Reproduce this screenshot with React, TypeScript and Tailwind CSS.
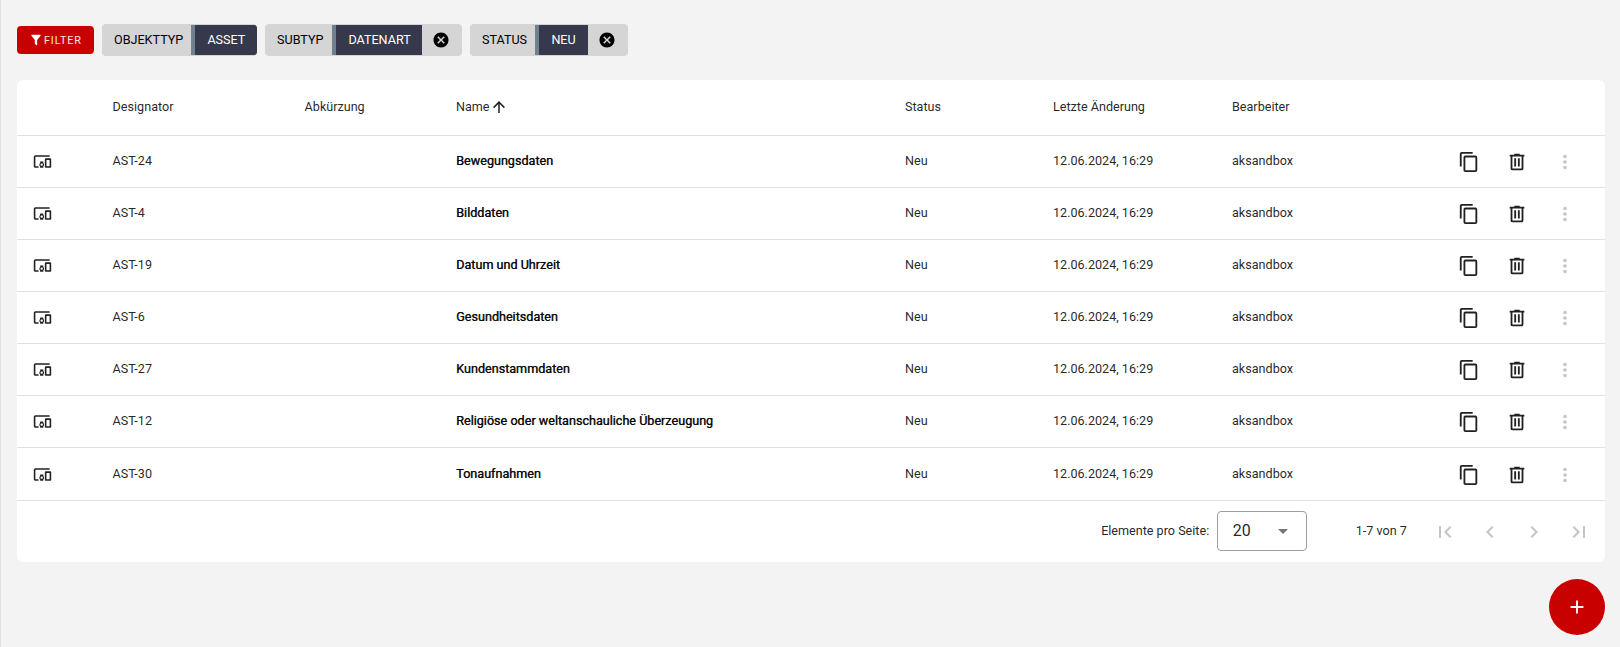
import React from "react";

type IconProps = { d: string; className: string };

function Icon({ d, className }: IconProps) {
  return (
    <svg viewBox="0 0 24 24" fill="currentColor" className={className} aria-hidden="true">
      <path d={d} />
    </svg>
  );
}

const icons = {
  filter: "M14,12V19.88C14.04,20.18 13.94,20.5 13.71,20.71C13.32,21.1 12.69,21.1 12.3,20.71L10.29,18.7C10.06,18.47 9.96,18.16 10,17.87V12H9.97L4.21,4.62C3.87,4.19 3.95,3.56 4.38,3.22C4.57,3.08 4.78,3 5,3H19C19.22,3 19.43,3.08 19.62,3.22C20.05,3.56 20.13,4.19 19.79,4.62L14.03,12H14Z",
  close: "M12,2C17.53,2 22,6.47 22,12C22,17.53 17.53,22 12,22C6.47,22 2,17.53 2,12C2,6.47 6.47,2 12,2M15.59,7L12,10.59L8.41,7L7,8.41L10.59,12L7,15.59L8.41,17L12,13.41L15.59,17L17,15.59L13.41,12L17,8.41L15.59,7Z",
  arrowUp: "M13,20H11V8L5.5,13.5L4.08,12.08L12,4.16L19.92,12.08L18.5,13.5L13,8V20Z",
  devices: "M3 6h18V4H3c-1.1 0-2 .9-2 2v12c0 1.1.9 2 2 2h4v-2H3V6zm10 6H9v1.78c-.61.55-1 1.33-1 2.22s.39 1.67 1 2.22V20h4v-1.78c.61-.55 1-1.34 1-2.22s-.39-1.67-1-2.22V12zm-2 5.5c-.83 0-1.5-.67-1.5-1.5s.67-1.5 1.5-1.5 1.5.67 1.5 1.5-.67 1.5-1.5 1.5zM22 8h-6c-.5 0-1 .5-1 1v10c0 .5.5 1 1 1h6c.5 0 1-.5 1-1V9c0-.5-.5-1-1-1zm-1 10h-4v-8h4v8z",
  copy: "M19,21H8V7H19M19,5H8A2,2 0 0,0 6,7V21A2,2 0 0,0 8,23H19A2,2 0 0,0 21,21V7A2,2 0 0,0 19,5M16,1H4A2,2 0 0,0 2,3V17H4V3H16V1Z",
  trash: "M9,3V4H4V6H5V19A2,2 0 0,0 7,21H17A2,2 0 0,0 19,19V6H20V4H15V3H9M7,6H17V19H7V6M9,8V17H11V8H9M13,8V17H15V8H13Z",
  dots: "M12,16A2,2 0 0,1 14,18A2,2 0 0,1 12,20A2,2 0 0,1 10,18A2,2 0 0,1 12,16M12,10A2,2 0 0,1 14,12A2,2 0 0,1 12,14A2,2 0 0,1 10,12A2,2 0 0,1 12,10M12,4A2,2 0 0,1 14,6A2,2 0 0,1 12,8A2,2 0 0,1 10,6A2,2 0 0,1 12,4Z",
  caret: "M7 10l5 5 5-5z",
  first: "M18.41 16.59L13.82 12l4.59-4.59L17 6l-6 6 6 6zM6 6h2v12H6z",
  prev: "M15.41 7.41L14 6l-6 6 6 6 1.41-1.41L10.83 12z",
  next: "M10 6L8.59 7.41 13.17 12l-4.58 4.59L10 18l6-6z",
  last: "M5.59 7.41L10.18 12l-4.59 4.59L7 18l6-6-6-6zM16 6h2v12h-2z",
  plus: "M19 13h-6v6h-2v-6H5v-2h6V5h2v6h6v2z",
};

const rows = [
  { id: "AST-24", name: "Bewegungsdaten" },
  { id: "AST-4", name: "Bilddaten" },
  { id: "AST-19", name: "Datum und Uhrzeit" },
  { id: "AST-6", name: "Gesundheitsdaten" },
  { id: "AST-27", name: "Kundenstammdaten" },
  { id: "AST-12", name: "Religiöse oder weltanschauliche Überzeugung" },
  { id: "AST-30", name: "Tonaufnahmen" },
];

const grid =
  "grid grid-cols-[95.6px_192px_151.4px_449px_148px_179px_373px] items-center";

type ChipProps = { label: string; value: string; width: string; valueWidth: string; removable?: boolean };

function Chip({ label, value, width, valueWidth, removable }: ChipProps) {
  return (
    <div className={`flex h-8 items-center overflow-hidden rounded-[4px] bg-[#d5d5d5] ${width}`}>
      <span className="flex-1 pl-3 text-black">{label}</span>
      <span className={`flex h-[30px] shrink-0 items-center border-l-4 border-[#708090] bg-[#36384c] pl-[12.4px] text-white ${valueWidth} ${removable ? "" : "rounded-r-[3px]"}`}>
        {value}
      </span>
      {removable && (
        <button className="flex w-10 shrink-0 justify-center pr-0.5 text-black">
          <Icon d={icons.close} className="size-[18px]" />
        </button>
      )}
    </div>
  );
}

export default function App() {
  return (
    <div className="flex h-[647px] flex-col border-l border-[#e0e0e0] bg-[#f3f3f3] pr-[15px] pl-4 font-['Roboto',sans-serif] text-[12.6px] text-black/87">
      <div className="flex h-20 items-center gap-2">
        <button className="flex h-7 w-[77px] items-center gap-px rounded-[4px] bg-[#c80000] pl-3 text-[10.8px] tracking-[0.9px] text-white">
          <Icon d={icons.filter} className="size-[14px]" />
          <span className="pt-0.5 text-white/90">FILTER</span>
        </button>
        <Chip label="OBJEKTTYP" value="ASSET" width="w-[155px]" valueWidth="w-[66px]" />
        <Chip label="SUBTYP" value="DATENART" width="w-[197px]" valueWidth="w-[90px]" removable />
        <Chip label="STATUS" value="NEU" width="w-[158px]" valueWidth="w-[53px]" removable />
      </div>

      <div className="h-[482px] rounded-md bg-white">
        <div className={`${grid} h-14 border-b border-[#e0e0e0] pb-px`}>
          <span />
          <span>Designator</span>
          <span>Abkürzung</span>
          <span className="flex items-center">
            Name
            <Icon d={icons.arrowUp} className="size-[18px]" />
          </span>
          <span>Status</span>
          <span>Letzte Änderung</span>
          <span>Bearbeiter</span>
        </div>
        {rows.map((row) => (
          <div key={row.id} className={`${grid} h-[52px] border-b border-[#e0e0e0] pb-px last-of-type:h-[53px] last-of-type:pb-0`}>
            <Icon d={icons.devices} className="mt-px ml-4 size-[19px]" />
            <span>{row.id}</span>
            <span />
            <span className="[text-shadow:0.5px_0_0_currentColor]">{row.name}</span>
            <span>Neu</span>
            <span>12.06.2024, 16:29</span>
            <div className="flex items-center justify-between pr-[29px]">
              <span className="flex-1">aksandbox</span>
              <div className="flex gap-[26px] pt-px">
                <Icon d={icons.copy} className="size-[22px]" />
                <Icon d={icons.trash} className="size-[22px]" />
                <Icon d={icons.dots} className="size-[22px] text-[#c4c4c4]" />
              </div>
            </div>
          </div>
        ))}
        <footer className="flex h-[60px] items-center justify-end pr-[14px]">
          <span>Elemente pro Seite:</span>
          <div className="ml-2 flex h-10 w-[90px] items-center justify-between rounded-[4px] border border-[#9e9e9e] pr-[11px] pl-[14.5px] text-base tracking-[0.15px]">
            20
            <Icon d={icons.caret} className="size-6 text-[#757575]" />
          </div>
          <span className="ml-[48.5px] w-[77.5px]">1-7 von 7</span>
          <div className="flex gap-[20.6px] pt-px text-[#c4c4c4]">
            <Icon d={icons.first} className="size-6" />
            <Icon d={icons.prev} className="size-6" />
            <Icon d={icons.next} className="size-6" />
            <Icon d={icons.last} className="size-6" />
          </div>
        </footer>
      </div>

      <button className="mt-[17px] flex size-14 items-center justify-center self-end rounded-full bg-[#c80000] text-white">
        <Icon d={icons.plus} className="size-[22px]" />
      </button>
    </div>
  );
}
